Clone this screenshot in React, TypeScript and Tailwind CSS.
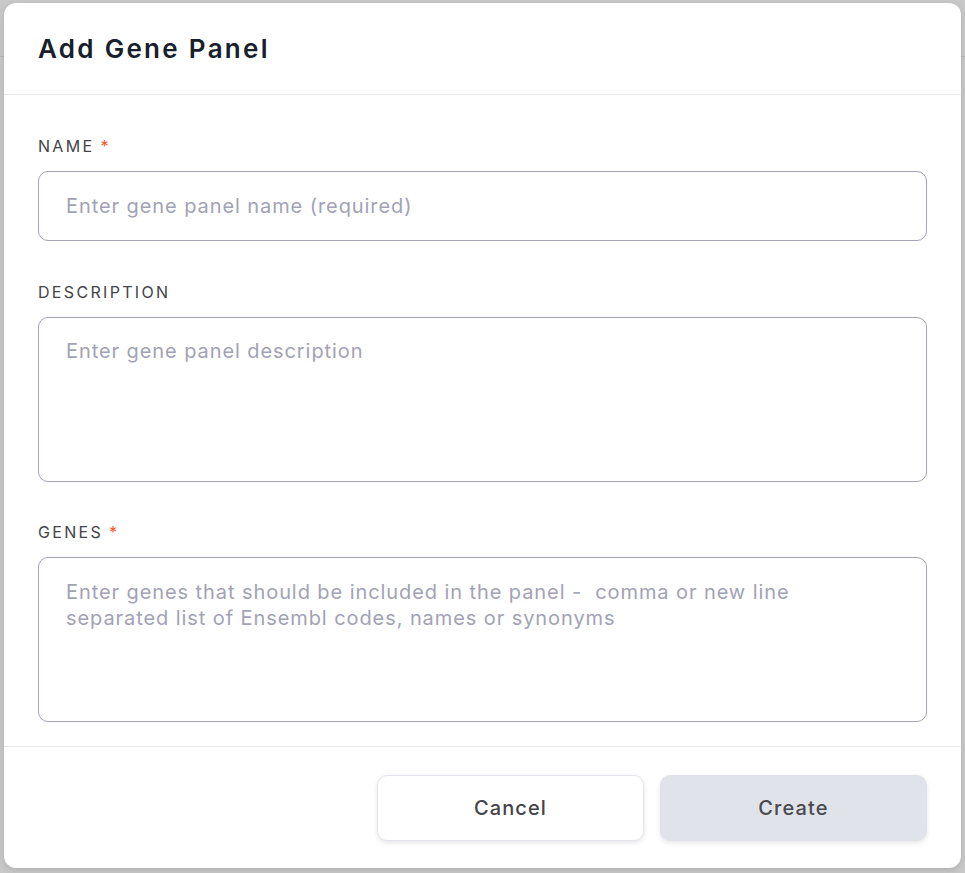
import React from 'react';

function Label({ text, required }: { text: string; required?: boolean }) {
  return (
    <label className="block text-[16px] leading-6 tracking-[0.145em] text-[#444448] uppercase mb-[13px]">
      {text}
      {required && <span className="ml-[6px] text-[#f2581f]">*</span>}
    </label>
  );
}

const fieldClass =
  'block w-full rounded-[10px] border border-[#a3a3b5] bg-white px-[27px] text-[20px] tracking-[0.046em] text-[#1f2933] placeholder:text-[#a2a2b5] outline-none';

export default function App() {
  return (
    <div className="relative h-[873px] w-full overflow-hidden bg-[#c8c8c8] font-['Inter','Liberation_Sans',sans-serif]">
      {/* page behind the overlay */}
      <div className="h-[57px] border-b border-[#b6b6b6]" />

      {/* Dialog */}
      <div className="absolute left-[4px] top-[3px] w-[957px] rounded-[12px] bg-white shadow-[0_2px_6px_rgba(0,0,0,0.12)]">
        <div className="flex h-[92px] items-center border-b border-[#e8e8ef] px-[34px]">
          <h2 className="text-[26px] font-semibold tracking-[0.088em] text-[#17202b]">Add Gene Panel</h2>
        </div>

        <div className="px-[34px] pt-[39px] pb-[24px]">
          <Label text="Name" required />
          <input
            type="text"
            placeholder="Enter gene panel name (required)"
            className={`${fieldClass} h-[70px]`}
          />

          <div className="mt-[39px]">
            <Label text="Description" />
            <textarea
              placeholder="Enter gene panel description"
              className={`${fieldClass} h-[165px] resize-none pt-[20px] leading-[26px]`}
            />
          </div>

          <div className="mt-[38px]">
            <Label text="Genes" required />
            <textarea
              placeholder={'Enter genes that should be included in the panel -  comma or new line separated list of Ensembl codes, names or synonyms'}
              className={`${fieldClass} h-[165px] resize-none pt-[21px] pr-[80px] leading-[26px]`}
            />
          </div>
        </div>

        <div className="flex justify-end gap-[16px] border-t border-[#e8e8ef] px-[34px] pt-[28px] pb-[27px]">
          <button className="h-[66px] w-[267px] rounded-[10px] border border-[#e4e4ec] bg-white text-[20px] font-medium tracking-[0.055em] text-[#444448] shadow-[0_2px_5px_rgba(0,0,0,0.1)]">
            Cancel
          </button>
          <button className="h-[66px] w-[267px] rounded-[10px] bg-[#e0e3ea] text-[20px] font-medium tracking-[0.055em] text-[#4a4a4e] shadow-[0_2px_5px_rgba(0,0,0,0.1)]">
            Create
          </button>
        </div>
      </div>
    </div>
  );
}
